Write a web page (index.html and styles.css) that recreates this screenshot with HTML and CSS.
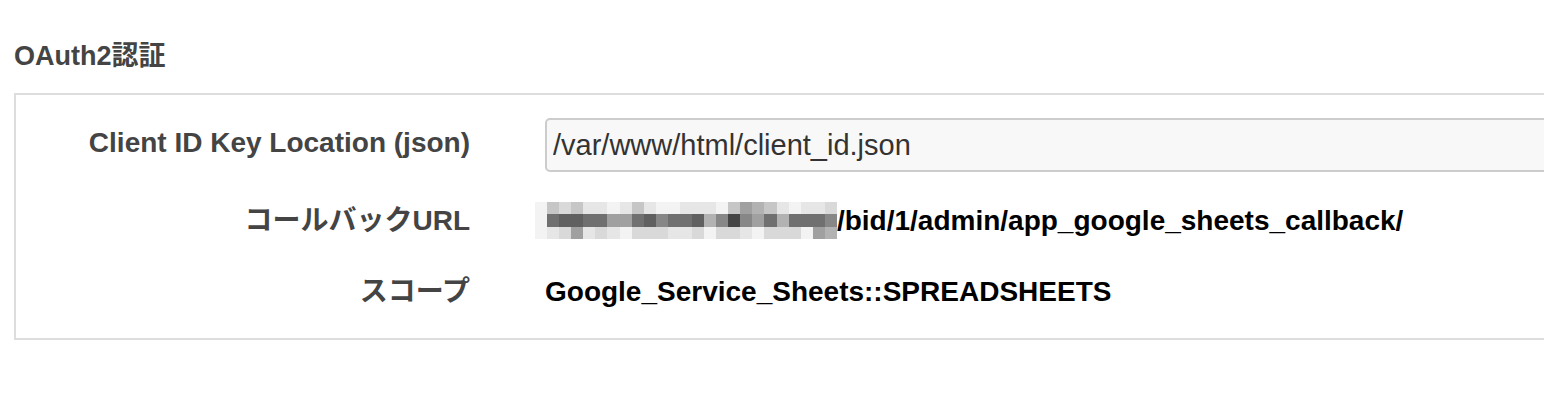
FILE: index.html
```html
<!DOCTYPE html>
<html lang="ja">
<head>
<meta charset="utf-8">
<title>OAuth2認証</title>
<link rel="stylesheet" href="styles.css">
</head>
<body>
<h4 class="section-title">OAuth2認証</h4>
<div class="panel">
  <div class="field-label field-label-top">Client ID Key Location (json)</div>
  <div class="field-value">
    <input class="text-input" type="text" value="/var/www/html/client_id.json">
  </div>

  <div class="field-label">コールバックURL</div>
  <div class="field-value static">
    <span class="mosaic" aria-hidden="true">
      <i class="a"></i><i class="d"></i><i class="c"></i><i class="d"></i><i class="b"></i><i class="b"></i><i class="a"></i><i class="b"></i><i class="d"></i><i class="b"></i><i class="a"></i><i class="a"></i><i class="b"></i><i class="b"></i><i class="b"></i><i class="a"></i><i class="d"></i><i class="f"></i><i class="e"></i><i class="d"></i><i class="b"></i><i class="a"></i><i class="b"></i><i class="b"></i><i class="c"></i>
      <i class="a"></i><i class="h"></i><i class="i"></i><i class="i"></i><i class="h"></i><i class="h"></i><i class="f"></i><i class="f"></i><i class="h"></i><i class="i"></i><i class="g"></i><i class="h"></i><i class="h"></i><i class="i"></i><i class="e"></i><i class="g"></i><i class="j"></i><i class="g"></i><i class="f"></i><i class="h"></i><i class="e"></i><i class="h"></i><i class="h"></i><i class="h"></i><i class="g"></i>
      <i class="a"></i><i class="b"></i><i class="c"></i><i class="f"></i><i class="b"></i><i class="c"></i><i class="b"></i><i class="a"></i><i class="c"></i><i class="c"></i><i class="c"></i><i class="b"></i><i class="b"></i><i class="c"></i><i class="a"></i><i class="c"></i><i class="c"></i><i class="b"></i><i class="a"></i><i class="c"></i><i class="c"></i><i class="c"></i><i class="a"></i><i class="f"></i><i class="e"></i>
    </span><span class="url-path">/bid/1/admin/app_google_sheets_callback/</span>
  </div>

  <div class="field-label row-last">スコープ</div>
  <div class="field-value static row-last">Google_Service_Sheets::SPREADSHEETS</div>
</div>
</body>
</html>
```

FILE: styles.css
```css
html, body {
  margin: 0;
  padding: 0;
  background: #ffffff;
  overflow: hidden;
}

body {
  font-family: "Liberation Sans", "Noto Sans CJK JP", sans-serif;
  color: #444444;
}

.section-title {
  margin: 40px 0 0 14px;
  font-size: 27px;
  line-height: 32px;
  font-weight: 700;
  color: #444444;
}

.panel {
  margin: 21px -60px 0 14px;
  border: 2px solid #dddddd;
  padding: 23px 0 28px 0;
  display: grid;
  grid-template-columns: 454px 1fr;
  grid-template-rows: 54px 40px 40px;
  column-gap: 75px;
  row-gap: 29px;
}

.field-label {
  font-size: 28px;
  line-height: 30px;
  font-weight: 700;
  color: #444444;
  text-align: right;
  align-self: center;
  white-space: nowrap;
}

.field-label-top {
  margin-bottom: 5px;
}

.row-last {
  margin-top: 3px;
}

.field-value {
  display: flex;
  align-items: center;
  min-width: 0;
}

.field-value.static {
  font-size: 28px;
  line-height: 30px;
  font-weight: 700;
  color: #000000;
  white-space: nowrap;
}

.text-input {
  box-sizing: border-box;
  width: 100%;
  height: 54px;
  margin: 0;
  padding: 0 8px 0 6px;
  border: 2px solid #cccccc;
  border-radius: 5px;
  background: #f8f8f8;
  font-family: "Liberation Sans", sans-serif;
  font-size: 29px;
  color: #333333;
  outline: none;
}

.mosaic {
  display: grid;
  grid-template-columns: repeat(25, 12.08px);
  grid-template-rows: 12px 13px 12px;
  margin: -4px 0 -3px -10px;
  flex: none;
}

.mosaic i {
  display: block;
}

.mosaic .a { background: #f3f3f3; }
.mosaic .b { background: #e6e6e6; }
.mosaic .c { background: #d9d9d9; }
.mosaic .d { background: #c6c6c6; }
.mosaic .e { background: #b2b2b2; }
.mosaic .f { background: #a0a0a0; }
.mosaic .g { background: #878787; }
.mosaic .h { background: #707070; }
.mosaic .i { background: #606060; }
.mosaic .j { background: #454545; }

.url-path {
  color: #000000;
}
```
